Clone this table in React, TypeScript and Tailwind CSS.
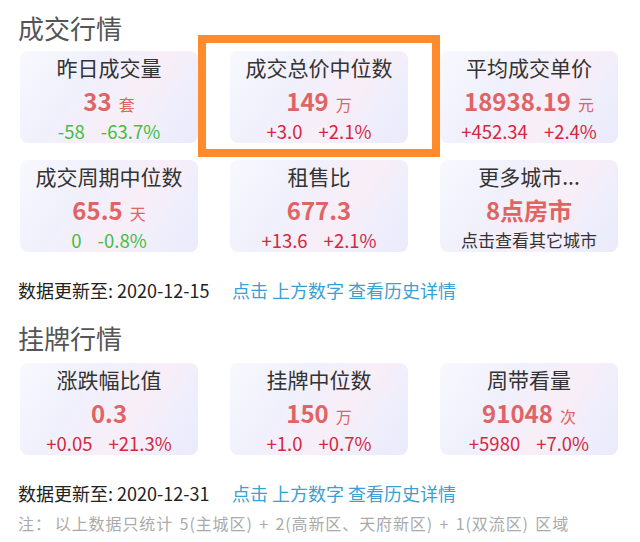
import React from 'react';

type Stat = {
  title: string;
  value: string;
  unit?: string;
  change?: [string, string];
  up?: boolean;
  sub?: string;
};

const deals: Stat[] = [
  { title: '昨日成交量', value: '33', unit: '套', change: ['-58', '-63.7%'], up: false },
  { title: '成交总价中位数', value: '149', unit: '万', change: ['+3.0', '+2.1%'], up: true },
  { title: '平均成交单价', value: '18938.19', unit: '元', change: ['+452.34', '+2.4%'], up: true },
  { title: '成交周期中位数', value: '65.5', unit: '天', change: ['0', '-0.8%'], up: false },
  { title: '租售比', value: '677.3', change: ['+13.6', '+2.1%'], up: true },
  { title: '更多城市...', value: '8点房市', sub: '点击查看其它城市' },
];

const listings: Stat[] = [
  { title: '涨跌幅比值', value: '0.3', change: ['+0.05', '+21.3%'], up: true },
  { title: '挂牌中位数', value: '150', unit: '万', change: ['+1.0', '+0.7%'], up: true },
  { title: '周带看量', value: '91048', unit: '次', change: ['+5980', '+7.0%'], up: true },
];

function Card({ s }: { s: Stat }) {
  return (
    <div className="h-[92px] rounded-lg bg-[linear-gradient(125deg,#f8f8fe_0%,#f0f0fc_35%,#f8eef7_62%,#efeefc_80%,#ebeafb_100%)] flex flex-col items-center pt-[3px]">
      <div className="h-[26px] leading-[26px] text-[21px] text-[#333]">{s.title}</div>
      <div className="h-[36px] mt-[3px] flex items-baseline leading-[36px]">
        <span className="text-[24px] font-semibold text-[#e06464]">{s.value}</span>
        {s.unit && <span className="ml-[7px] text-[16px] text-[#e06464]">{s.unit}</span>}
      </div>
      {s.change && (
        <div
          className={
            'h-[24px] leading-[24px] text-[18.5px] flex gap-[16px] ' +
            (s.up ? 'text-[#d4283d]' : 'text-[#3fbf3f]')
          }
        >
          <span>{s.change[0]}</span>
          <span>{s.change[1]}</span>
        </div>
      )}
      {s.sub && <div className="h-[24px] leading-[24px] text-[17px] text-[#333]">{s.sub}</div>}
    </div>
  );
}

export default function App() {
  return (
    <main
      className="w-[640px] h-[542px] bg-white overflow-hidden pt-[10px]"
      style={{ fontFamily: '"Noto Sans CJK SC", "Noto Sans", sans-serif' }}
    >
      <h2 className="pl-[18px] h-[36px] leading-[36px] text-[26px] text-[#555]">成交行情</h2>

      <div className="relative mt-[5px] pl-[20px] grid grid-cols-[178px_178px_178px] gap-x-[32px] gap-y-[17px]">
        {deals.map((s) => (
          <Card key={s.title} s={s} />
        ))}
        <div className="absolute left-[198px] top-[-16px] w-[242px] h-[122px] border-[8px] border-[#ff8b2c]" />
      </div>

      <div className="mt-[26px] pl-[18px] h-[24px] leading-[24px] text-[18px] flex">
        <span className="text-[#222] w-[214px]">数据更新至: 2020-12-15</span>
        <span className="text-[#3a9fd5]">点击 上方数字 查看历史详情</span>
      </div>

      <h2 className="mt-[18px] pl-[18px] h-[36px] leading-[36px] text-[26px] text-[#555]">挂牌行情</h2>

      <div className="mt-[7px] pl-[20px] grid grid-cols-[178px_178px_178px] gap-x-[32px]">
        {listings.map((s) => (
          <Card key={s.title} s={s} />
        ))}
      </div>

      <div className="mt-[26px] pl-[18px] h-[24px] leading-[24px] text-[18px] flex">
        <span className="text-[#222] w-[214px]">数据更新至: 2020-12-31</span>
        <span className="text-[#3a9fd5]">点击 上方数字 查看历史详情</span>
      </div>

      <div className="mt-[6px] pl-[18px] h-[24px] leading-[24px] text-[16px] tracking-[0.9px] [word-spacing:2px] text-[#aaa] whitespace-nowrap flex">
        <span>注：</span>
        <span className="ml-[3px]">以上数据只统计 5(主城区) + 2(高新区、天府新区) + 1(双流区) 区域</span>
      </div>
    </main>
  );
}
